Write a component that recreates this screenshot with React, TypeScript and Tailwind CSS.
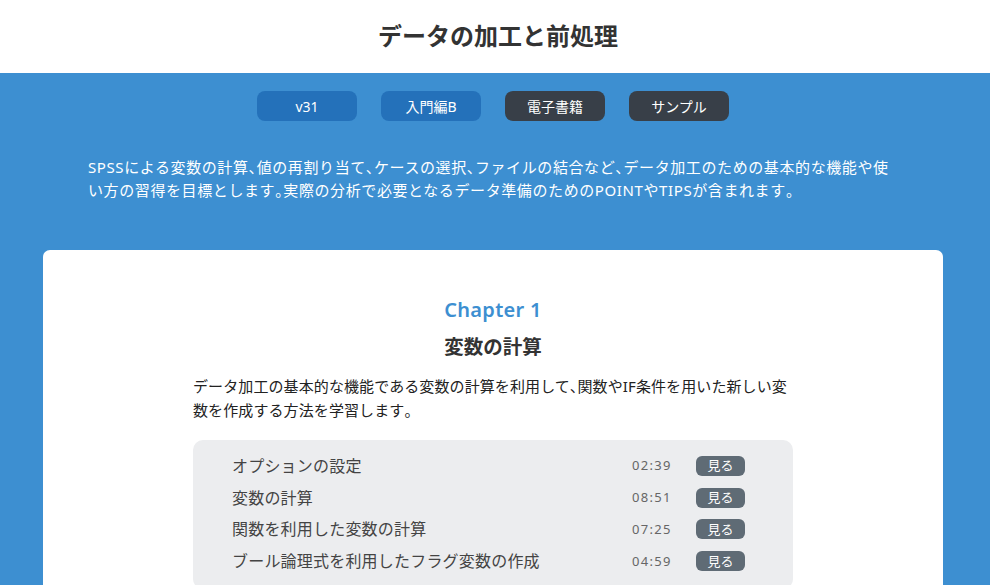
import React from "react";

const items = [
  { t: "オプションの設定", d: "02:39" },
  { t: "変数の計算", d: "08:51" },
  { t: "関数を利用した変数の計算", d: "07:25" },
  { t: "ブール論理式を利用したフラグ変数の作成", d: "04:59" },
];

function Yaku({ text }: { text: string }) {
  const parts = text.split(/([、。])/);
  return (
    <>
      {parts.map((p, i) =>
        p === "、" || p === "。" ? (
          <span key={i} className="[font-feature-settings:'palt']">
            {p}
          </span>
        ) : (
          <React.Fragment key={i}>{p}</React.Fragment>
        )
      )}
    </>
  );
}

export default function App() {
  return (
    <div
      className="w-[990px] h-[585px] overflow-hidden bg-[#3d8fd1]"
      style={{ fontFamily: '"Noto Sans", "Noto Sans CJK JP", sans-serif' }}
    >
      <header className="h-[73px] bg-white flex items-center justify-center pl-[6px] pb-[2px]">
        <h1 className="text-[24px] font-bold text-[#333333] leading-none">
          データの加工と前処理
        </h1>
      </header>
      <div className="w-[986px]">
        <div className="flex justify-center gap-[24px] pt-[18px]">
          <span className="w-[100px] h-[30px] rounded-[8px] bg-[#2471ba] text-white text-[14px] flex items-center justify-center">v31</span>
          <span className="w-[100px] h-[30px] rounded-[8px] bg-[#2471ba] text-white text-[14px] flex items-center justify-center">入門編B</span>
          <span className="w-[100px] h-[30px] rounded-[8px] bg-[#383f48] text-white text-[14px] flex items-center justify-center">電子書籍</span>
          <span className="w-[100px] h-[30px] rounded-[8px] bg-[#383f48] text-white text-[14px] flex items-center justify-center">サンプル</span>
        </div>
        <p className="mt-[35px] ml-[88px] w-[816px] text-white text-[15px] leading-[23px] tracking-[0.6px]">
          <Yaku text="SPSSによる変数の計算、値の再割り当て、ケースの選択、ファイルの結合など、データ加工のための基本的な機能や使い方の習得を目標とします。実際の分析で必要となるデータ準備のためのPOINTやTIPSが含まれます。" />
        </p>
        <div className="mt-[48px] ml-[43px] w-[900px] bg-white rounded-[7px] pt-[46px] pb-[40px] flex flex-col items-center">
          <div className="text-[20px] font-semibold text-[#3d8fd1] leading-[28px] tracking-[0.3px]">Chapter 1</div>
          <div className="mt-[9px] text-[19.5px] font-bold text-[#333333] leading-[28px]">変数の計算</div>
          <p className="mt-[13px] w-[600px] text-[15px] leading-[24px] text-[#222222] tracking-[0.1px]">
            <Yaku text="データ加工の基本的な機能である変数の計算を利用して、関数やIF条件を用いた新しい変数を作成する方法を学習します。" />
          </p>
          <div className="mt-[18px] w-[600px] bg-[#ecedef] rounded-[10px] pt-[10px] pb-[12px] pl-[39px] pr-[48px] flex flex-col">
            {items.map((it) => (
              <div key={it.d} className="h-[31.8px] flex items-center">
                <span className="flex-1 text-[16px] text-[#444444] tracking-[0.2px]">{it.t}</span>
                <span className="w-[64px] text-[13px] text-[#666666] tracking-[1.3px]">{it.d}</span>
                <span className="w-[49px] h-[20px] rounded-[6px] bg-[#5f6b75] text-white text-[13px] flex items-center justify-center">見る</span>
              </div>
            ))}
          </div>
        </div>
      </div>
    </div>
  );
}
